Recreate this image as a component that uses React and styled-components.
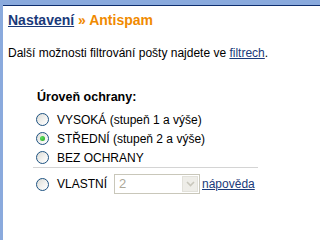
import React, { useState } from 'react';
import styled, { createGlobalStyle } from 'styled-components';

const GlobalStyle = createGlobalStyle`
  html, body {
    margin: 0;
    padding: 0;
    background: #fff;
  }
  body {
    font-family: "Liberation Sans", Arial, sans-serif;
    font-size: 12px;
    color: #000;
  }
`;

const levels = [
  { id: 'high', label: 'VYSOKÁ (stupeň 1 a výše)' },
  { id: 'mid', label: 'STŘEDNÍ (stupeň 2 a výše)' },
  { id: 'none', label: 'BEZ OCHRANY' },
];

const App = () => {
  const [level, setLevel] = useState('mid');

  return (
    <Page>
      <GlobalStyle />
      <TopBar />
      <Content>
        <Title>
          <TitleLink href="#">Nastavení</TitleLink> <Current>» Antispam</Current>
        </Title>
        <Intro>
          Další možnosti filtrování pošty najdete ve <Link href="#">filtrech</Link>.
        </Intro>

        <Protection>
          <Legend>Úroveň ochrany:</Legend>
          {levels.map((l) => (
            <Option key={l.id} onClick={() => setLevel(l.id)}>
              <Radio $checked={level === l.id} />
              {l.label}
            </Option>
          ))}
          <Divider />
          <Option $custom onClick={() => setLevel('custom')}>
            <Radio $checked={level === 'custom'} />
            VLASTNÍ
            <Select>
              <SelectValue>2</SelectValue>
              <SelectButton>
                <svg width="9" height="6" viewBox="0 0 9 6">
                  <path d="M1 1 L4.5 4.5 L8 1" fill="none" stroke="#c9c7bc" strokeWidth="1.6" />
                </svg>
              </SelectButton>
            </Select>
            <Link href="#">nápověda</Link>
          </Option>
        </Protection>
      </Content>
    </Page>
  );
};

export default App;

const Page = styled.div`
  min-height: 100vh;
  border-left: 3px solid #8aaadd;
  box-sizing: border-box;
`;

const TopBar = styled.div`
  height: 5px;
  background: #8aaadd;
  border-bottom: 1px solid #0e2e6e;
`;

const Content = styled.div`
  padding: 6px 0 0 5px;
`;

const Title = styled.h1`
  margin: 0;
  font-size: 14px;
  line-height: 17px;
  font-weight: bold;
`;

const TitleLink = styled.a`
  color: #1a3a7a;
  text-decoration: underline;
`;

const Current = styled.span`
  color: #f08a00;
`;

const Intro = styled.p`
  margin: 17px 0 0;
  line-height: 14px;
`;

const Link = styled.a`
  color: #1a3a7a;
  text-decoration: underline;
`;

const Protection = styled.div`
  margin: 30px 0 0 25px;
  width: 225px;
`;

const Legend = styled.div`
  font-weight: bold;
  font-size: 12.5px;
  line-height: 14px;
  padding-left: 4px;
  margin-bottom: 6px;
`;

const Option = styled.label`
  display: flex;
  align-items: center;
  height: ${(p) => (p.$custom ? '24px' : '19px')};
  padding-left: 3px;
  margin-top: ${(p) => (p.$custom ? '4px' : '0')};
  cursor: default;
`;

const Radio = styled.span`
  position: relative;
  flex: none;
  width: 11px;
  height: 11px;
  margin-right: 8px;
  border: 1px solid #1d5281;
  border-radius: 50%;
  background: linear-gradient(135deg, #dcdcd6 0%, #f4f4f2 60%, #fff 100%);

  &::after {
    content: '';
    display: ${(p) => (p.$checked ? 'block' : 'none')};
    position: absolute;
    left: 3px;
    top: 3px;
    width: 5px;
    height: 5px;
    border-radius: 50%;
    background: radial-gradient(circle at 35% 35%, #5ee05e, #21a121);
  }
`;

const Divider = styled.div`
  height: 0;
  border-top: 1px solid #d4d4d4;
`;

const Select = styled.div`
  display: flex;
  width: 84px;
  height: 18px;
  margin-left: 7px;
  margin-right: 2px;
  border: 1px solid #c9c7ba;
  background: #fff;
`;

const SelectValue = styled.span`
  flex: 1;
  padding-left: 4px;
  color: #aca899;
  font-size: 13px;
  line-height: 18px;
`;

const SelectButton = styled.span`
  display: flex;
  align-items: center;
  justify-content: center;
  width: 16px;
  margin: 1px;
  background: #eeede8;
  border: 1px solid #e2e1da;
  box-sizing: border-box;
`;
